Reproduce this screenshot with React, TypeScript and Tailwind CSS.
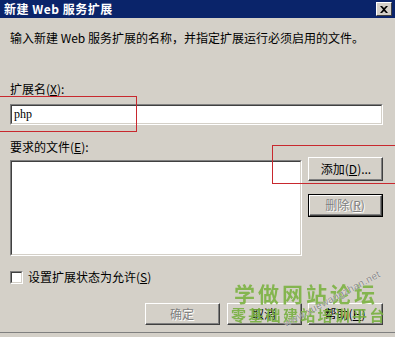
import React from "react";

const font = { fontFamily: '"Noto Sans CJK SC", "Liberation Sans", sans-serif' };

function Button({
  children,
  disabled,
  isDefault,
  className = "",
}: {
  children: React.ReactNode;
  disabled?: boolean;
  isDefault?: boolean;
  className?: string;
}) {
  const inner = (
    <div className="h-full w-full border-t border-l border-t-white border-l-white border-b border-r border-b-[#404040] border-r-[#404040]">
      <div
        className={
          "h-full w-full flex items-center justify-center border-b border-r border-b-[#808080] border-r-[#808080] text-[12px] leading-[14px] " +
          (disabled ? "text-[#808080] [text-shadow:1px_1px_0_#ffffff]" : "text-black")
        }
      >
        {children}
      </div>
    </div>
  );
  if (isDefault) {
    return <div className={"border border-black bg-[#d4d0c8] " + className}>{inner}</div>;
  }
  return <div className={"bg-[#d4d0c8] " + className}>{inner}</div>;
}

function Sunken({ className = "", children }: { className?: string; children?: React.ReactNode }) {
  return (
    <div className={"border-t border-l border-t-[#808080] border-l-[#808080] border-b border-r border-b-white border-r-white " + className}>
      <div className="h-full w-full border-t border-l border-t-[#404040] border-l-[#404040] border-b border-r border-b-[#d4d0c8] border-r-[#d4d0c8] bg-white">
        {children}
      </div>
    </div>
  );
}

export default function App() {
  return (
    <div className="relative w-[395px] h-[337px] overflow-hidden bg-[#d4d0c8] text-black" style={font}>
      {/* Title bar */}
      <div className="h-[18px] bg-[#0a246a] flex items-center justify-between pl-[4px] pr-[3px]">
        <span className="text-white font-bold text-[12px] leading-[14px] tracking-[0.5px]">新建 Web 服务扩展</span>
        <div className="w-[16px] h-[14px] bg-[#d4d0c8] border-t border-l border-t-white border-l-white border-b border-r border-b-[#404040] border-r-[#404040] flex items-center justify-center">
          <svg width="8" height="7" viewBox="0 0 8 7">
            <path d="M0 0h2l2 2 2-2h2L5 3.5 8 7H6L4 5 2 7H0l3-3.5z" fill="#000" />
          </svg>
        </div>
      </div>

      <div className="pl-[10px] pr-[12px] flex flex-col">
        <div className="mt-[13px] text-[12px] leading-[14px]">
          输入新建 Web 服务扩展的名称，并指定扩展运行必须启用的文件。
        </div>

        <div className="mt-[37px] text-[12px] leading-[14px]">
          扩展名(<span className="underline">X</span>):
        </div>
        <Sunken className="mt-[8px] h-[21px] w-full">
          <div className="pl-[2px] text-[12px] leading-[17px]" style={{ fontFamily: '"Liberation Serif", serif' }}>
            php
          </div>
        </Sunken>

        <div className="mt-[15px] text-[12px] leading-[14px]">
          要求的文件(<span className="underline">E</span>):
        </div>
        <div className="mt-[3px] flex gap-[6px]">
          <Sunken className="mt-[3px] w-[292px] h-[96px]" />
          <div className="flex flex-col gap-[13px]">
            <Button className="w-[75px] h-[24px]">
              <span className="pl-[2px]">添加(<span className="underline">D</span>)...</span>
            </Button>
            <Button className="w-[75px] h-[23px]" disabled isDefault>
              删除(<span className="underline">R</span>)
            </Button>
          </div>
        </div>

        <div className="mt-[14px] flex items-center gap-[5px]">
          <Sunken className="w-[13px] h-[13px]" />
          <span className="text-[12px] leading-[14px]">
            设置扩展状态为允许(<span className="underline">S</span>)
          </span>
        </div>

        <div className="mt-[19px] flex justify-end gap-[6px]">
          <Button className="w-[75px] h-[22px] mr-[1px]" disabled>
            确定
          </Button>
          <Button className="w-[75px] h-[22px]">取消</Button>
          <Button className="w-[75px] h-[22px]">
            帮助(<span className="underline">H</span>)
          </Button>
        </div>
      </div>

      {/* bottom window edge */}
      <div className="absolute left-0 right-0 top-[332px] h-[1px] bg-[#808080]" />
      <div className="absolute left-0 right-0 top-[333px] h-[4px] bg-[#d4d0c8]" />

      {/* red annotation boxes */}
      <div className="absolute left-[-2px] top-[96px] w-[139px] h-[36px] border border-[#c8282e]" />
      <div className="absolute left-[272px] top-[145px] w-[140px] h-[39px] border border-[#c8282e]" />

      {/* watermark */}
      <div className="absolute left-[234px] top-[281px] text-[21px] leading-[24px] font-bold tracking-[3px] text-[#7cb342] opacity-90 pointer-events-none">
        学做网站论坛
      </div>
      <div className="absolute left-[231px] top-[306px] text-[15px] leading-[18px] font-bold tracking-[2.3px] text-[#78b040] opacity-90 pointer-events-none">
        零基础建站培训平台
      </div>
      <div
        className="absolute left-[278px] top-[293px] text-[10px] leading-[12px] text-[#8a8a8a] origin-center rotate-[-28deg] tracking-[0.3px] pointer-events-none [text-shadow:0_0_1px_#ffffff]"
        style={{ fontFamily: '"Liberation Sans", sans-serif' }}
      >
        www.xuewangzhan.net
      </div>
    </div>
  );
}
